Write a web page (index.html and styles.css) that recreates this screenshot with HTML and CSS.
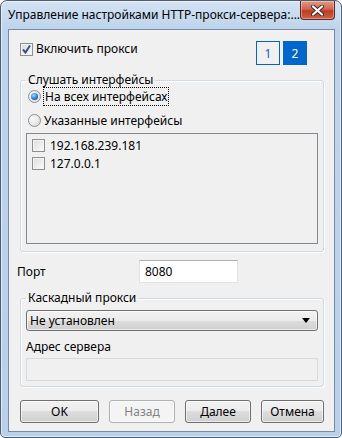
FILE: index.html
```html
<!DOCTYPE html>
<html lang="ru">
<head>
    <meta charset="UTF-8">
    <title>Управление настройками HTTP-прокси-сервера</title>
    <link rel="stylesheet" href="styles.css">
</head>
<body>
    <div class="window">
        <div class="titlebar">
            <span class="title">Управление настройками HTTP-прокси-сервера:...</span>
            <div class="close-btn">
                <svg width="13" height="11" viewBox="0 0 13 11">
                    <path d="M2 1.5 L11 9.5 M11 1.5 L2 9.5" stroke="#3a2a2a" stroke-width="4" stroke-linecap="round"/>
                    <path d="M2 1.5 L11 9.5 M11 1.5 L2 9.5" stroke="#ffffff" stroke-width="2.2" stroke-linecap="round"/>
                </svg>
            </div>
        </div>

        <div class="client">
            <!-- включение + страницы -->
            <div class="top-row">
                <div class="check">
                    <span class="box">
                        <svg width="11" height="11" viewBox="0 0 11 11">
                            <path d="M2 5.5 L4.5 8.5 L9 1.5" fill="none" stroke="#3d4f8f" stroke-width="2"/>
                        </svg>
                    </span>
                    Включить прокси
                </div>
                <div class="pager">
                    <span class="page">1</span>
                    <span class="page active">2</span>
                </div>
            </div>

            <fieldset class="group listen">
                <legend>Слушать интерфейсы</legend>
                <div class="radio"><span class="dot on"></span><span class="focus">На всех интерфейсах</span></div>
                <div class="radio second"><span class="dot"></span>Указанные интерфейсы</div>
                <div class="listbox">
                    <div class="check item"><span class="box"></span>192.168.239.181</div>
                    <div class="check item"><span class="box"></span>127.0.0.1</div>
                </div>
            </fieldset>

            <div class="port-row">
                <span class="port-label">Порт</span>
                <div class="textbox port">8080</div>
            </div>

            <fieldset class="group cascade">
                <legend>Каскадный прокси</legend>
                <div class="combo">
                    <span>Не установлен</span>
                    <svg width="8" height="5" viewBox="0 0 8 5"><path d="M0 0 H8 L4 5 Z" fill="#000"/></svg>
                </div>
                <div class="field-label">Адрес сервера</div>
                <div class="textbox disabled"></div>
            </fieldset>

            <div class="buttons">
                <div class="btn ok">OK</div>
                <div class="btn back disabled">Назад</div>
                <div class="btn next">Далее</div>
                <div class="btn cancel">Отмена</div>
            </div>
        </div>
    </div>
</body>
</html>
```

FILE: styles.css
```css
body {
    margin: 0;
    font-family: "Noto Sans", "Open Sans", sans-serif;
    font-size: 12px;
    color: #000;
    background: #fff;
}
.window {
    width: 342px;
    height: 438px;
    box-sizing: border-box;
    border: 1px solid #4d5e73;
    border-radius: 7px 7px 5px 5px;
    background: linear-gradient(180deg, #d3e2f3 0, #bed4ec 28px, #b9d0ea 100%);
    box-shadow: inset 0 0 0 1px rgba(255, 255, 255, 0.55);
    padding: 0 6px 5px 7px;
    display: flex;
    flex-direction: column;
}
.titlebar {
    height: 28px;
    display: flex;
    align-items: flex-start;
    justify-content: space-between;
}
.title {
    margin-top: 6px;
    font-size: 12px;
    line-height: 16px;
    white-space: nowrap;
}
.close-btn {
    width: 45px;
    height: 18px;
    border: 1px solid #5b2a22;
    border-top: none;
    border-radius: 0 0 4px 4px;
    background: linear-gradient(180deg, #e39a87 0, #d0654d 45%, #bd3c22 55%, #cc6248 100%);
    box-shadow: inset 0 0 0 1px rgba(255, 255, 255, 0.35);
    display: flex;
    align-items: center;
    justify-content: center;
}
.client {
    flex: 1;
    background: #f0f0f0;
    border: 1px solid #7a8ba1;
    padding: 0 10px 0 11px;
}

/* чекбоксы и радиокнопки */
.check {
    display: flex;
    align-items: center;
    line-height: 16px;
}
.box {
    width: 11px;
    height: 11px;
    border: 1px solid #8e8f8f;
    background: linear-gradient(135deg, #dcdcdc, #fbfbfb);
    box-shadow: inset 0 0 0 1px #f4f4f4;
    margin-right: 3px;
    display: flex;
    align-items: center;
    justify-content: center;
    flex-shrink: 0;
}
.top-row {
    margin-top: 11px;
    display: flex;
    justify-content: space-between;
    align-items: flex-start;
}
.pager {
    display: flex;
    gap: 3px;
    margin-right: 17px;
}
.page {
    width: 22px;
    height: 22px;
    border: 1px solid #0066cc;
    color: #0066cc;
    display: flex;
    align-items: center;
    justify-content: center;
    font-size: 12px;
}
.page.active {
    background: #0066cc;
    color: #fff;
}

.group {
    margin: 5px 0 0 0;
    border: 1px solid #d0dae2;
    border-radius: 3px;
    box-shadow: inset 1px 1px 0 #fff, 1px 1px 0 #fff;
    padding: 0 5px 7px 5px;
    width: 304px;
    box-sizing: border-box;
}
.listen {
    margin-top: 7px;
}
.group legend {
    padding: 0 2px;
    line-height: 16px;
}
.radio {
    display: flex;
    align-items: center;
    height: 16px;
    margin-left: 2px;
    margin-top: 0;
}
.radio.second {
    margin-top: 8px;
}
.dot {
    width: 11px;
    height: 11px;
    border: 1px solid #8e8f8f;
    border-radius: 50%;
    background: radial-gradient(circle at 35% 35%, #fbfbfb, #d6d6d6);
    margin-right: 3px;
    display: flex;
    align-items: center;
    justify-content: center;
}
.dot.on::after {
    content: "";
    width: 7px;
    height: 7px;
    border-radius: 50%;
    background: radial-gradient(circle at 40% 35%, #a4dcff, #1a73cf 60%, #0c4a94);
}
.focus {
    outline: 1px dotted #000;
    outline-offset: 0;
    padding: 0 1px;
}
.listbox {
    margin-top: 5px;
    height: 105px;
    border: 1px solid #828790;
    padding: 4px 5px 0 5px;
}
.listbox .item {
    height: 18px;
    align-items: flex-start;
}
.listbox .item .box {
    margin-top: 1px;
    margin-right: 5px;
}

.port-row {
    margin-top: 8px;
    display: flex;
    align-items: center;
}
.port-label {
    width: 122px;
    margin-left: -3px;
}
.textbox {
    height: 21px;
    border: 1px solid #e2e3ea;
    border-top-color: #abadb3;
    background: #fff;
    padding-left: 5px;
    line-height: 21px;
}
.textbox.port {
    width: 92px;
}
.cascade {
    margin-top: 7px;
    padding-bottom: 5px;
}
.combo {
    margin-top: 4px;
    height: 19px;
    border: 1px solid #707070;
    border-radius: 3px;
    background: linear-gradient(180deg, #f2f2f2 0, #ebebeb 50%, #dddddd 50%, #cfcfcf 100%);
    box-shadow: inset 0 0 0 1px rgba(255, 255, 255, 0.6);
    display: flex;
    align-items: center;
    justify-content: space-between;
    padding: 0 7px 0 3px;
}
.field-label {
    margin-top: 8px;
    line-height: 16px;
}
.textbox.disabled {
    margin-top: 3px;
    background: #f0f0f0;
    border-color: #d9d9d9;
}

.buttons {
    margin-top: 13px;
    width: 304px;
    display: flex;
    justify-content: space-between;
}
.btn {
    height: 21px;
    border: 1px solid #707070;
    border-radius: 3px;
    background: linear-gradient(180deg, #f2f2f2 0, #ebebeb 50%, #dddddd 50%, #cfcfcf 100%);
    box-shadow: inset 0 0 0 1px rgba(255, 255, 255, 0.6);
    display: flex;
    align-items: center;
    justify-content: center;
}
.btn.ok { width: 77px; }
.btn.back, .btn.next { width: 64px; }
.btn.cancel { width: 61px; }
.btn.disabled {
    border-color: #adb2b5;
    background: #f4f4f4;
    color: #838383;
}
```
